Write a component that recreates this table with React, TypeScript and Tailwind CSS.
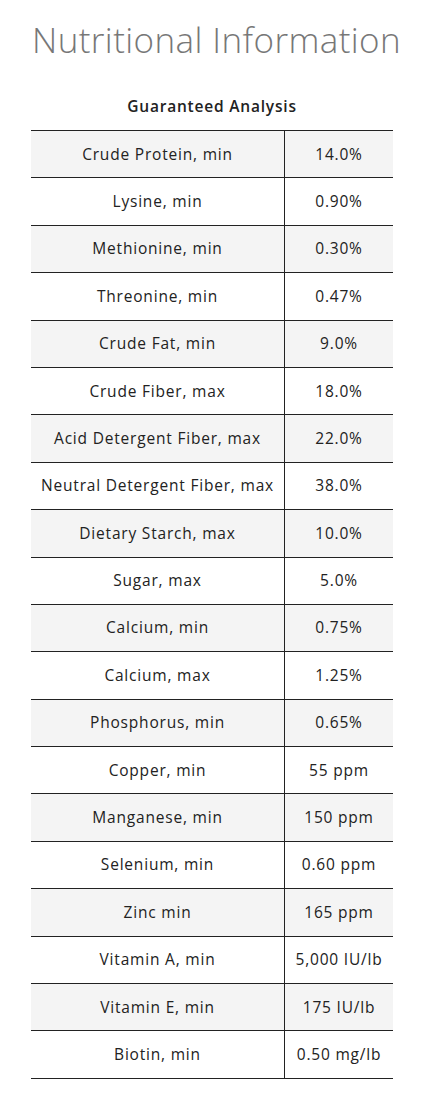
const rows: [string, string][] = [
  ["Crude Protein, min", "14.0%"],
  ["Lysine, min", "0.90%"],
  ["Methionine, min", "0.30%"],
  ["Threonine, min", "0.47%"],
  ["Crude Fat, min", "9.0%"],
  ["Crude Fiber, max", "18.0%"],
  ["Acid Detergent Fiber, max", "22.0%"],
  ["Neutral Detergent Fiber, max", "38.0%"],
  ["Dietary Starch, max", "10.0%"],
  ["Sugar, max", "5.0%"],
  ["Calcium, min", "0.75%"],
  ["Calcium, max", "1.25%"],
  ["Phosphorus, min", "0.65%"],
  ["Copper, min", "55 ppm"],
  ["Manganese, min", "150 ppm"],
  ["Selenium, min", "0.60 ppm"],
  ["Zinc min", "165 ppm"],
  ["Vitamin A, min", "5,000 IU/lb"],
  ["Vitamin E, min", "175 IU/lb"],
  ["Biotin, min", "0.50 mg/lb"],
];

export default function App() {
  return (
    <div className="w-[431px] h-[1110px] bg-white font-['Open_Sans',sans-serif] text-[#222]">
      {/* Title */}
      <h1 className="pt-[18px] pl-[32px] text-[35px] leading-[44px] font-light text-[#777] tracking-[0.4px]">
        Nutritional Information
      </h1>
      <h2 className="mt-[34px] ml-[31px] w-[362px] text-center text-[15.5px] font-semibold leading-[20px] tracking-[0.8px]">
        Guaranteed Analysis
      </h2>
      {/* Table */}
      <div className="mt-[14px] ml-[31px] w-[362px] border-t border-[#222]">
        {rows.map(([name, value], i) => (
          <div
            key={name}
            className={`flex h-[47.4px] border-b border-[#222] text-[15.5px] tracking-[0.8px] ${
              i % 2 === 0 ? "bg-[#f4f4f4]" : "bg-white"
            }`}
          >
            <div className="w-[254px] flex items-center justify-center border-r border-[#222]">
              {name}
            </div>
            <div className="flex-1 flex items-center justify-center">{value}</div>
          </div>
        ))}
      </div>
    </div>
  );
}
